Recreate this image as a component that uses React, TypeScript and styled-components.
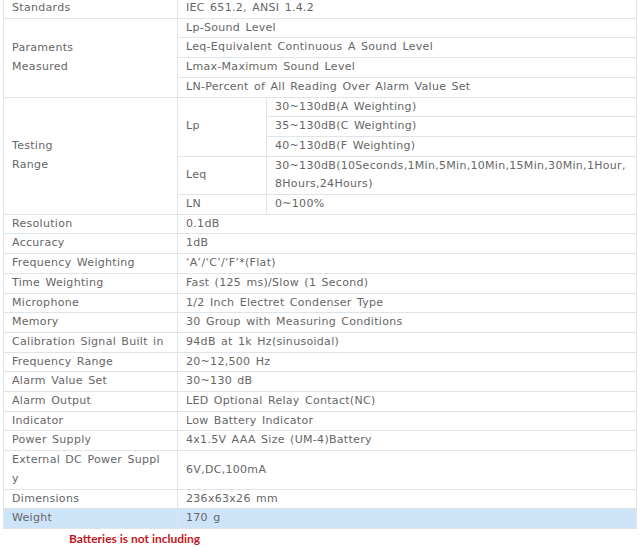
import styled, { createGlobalStyle } from "styled-components"

const GlobalStyle = createGlobalStyle`
  html, body {
    margin: 0;
    padding: 0;
    background: #ffffff;
  }
`

interface Spec {
  label: string
  value: string
}

const simpleRows: Spec[] = [
  { label: "Resolution", value: "0.1dB" },
  { label: "Accuracy", value: "1dB" },
  { label: "Frequency Weighting", value: "‘A’/‘C’/‘F’*(Flat)" },
  { label: "Time Weighting", value: "Fast (125 ms)/Slow (1 Second)" },
  { label: "Microphone", value: "1/2 Inch Electret Condenser Type" },
  { label: "Memory", value: "30 Group with Measuring Conditions" },
  { label: "Calibration Signal Built in", value: "94dB at 1k Hz(sinusoidal)" },
  { label: "Frequency Range", value: "20~12,500 Hz" },
  { label: "Alarm Value Set", value: "30~130 dB" },
  { label: "Alarm Output", value: "LED Optional Relay Contact(NC)" },
  { label: "Indicator", value: "Low Battery Indicator" },
  { label: "Power Supply", value: "4x1.5V AAA Size (UM-4)Battery" },
]

const measured = [
  "Lp-Sound Level",
  "Leq-Equivalent Continuous A Sound Level",
  "Lmax-Maximum Sound Level",
  "LN-Percent of All Reading Over Alarm Value Set",
]

const lpRanges = [
  "30~130dB(A Weighting)",
  "35~130dB(C Weighting)",
  "40~130dB(F Weighting)",
]

const App = () => {
  return (
    <>
      <GlobalStyle />
      <Page>
        <SpecTable>
          <colgroup>
            <col style={{ width: 174 }} />
            <col style={{ width: 89 }} />
            <col />
          </colgroup>
          <tbody>
            <tr>
              <Cell>Standards</Cell>
              <Cell colSpan={2}>IEC 651.2, ANSI 1.4.2</Cell>
            </tr>

            {measured.map((item, i) => (
              <tr key={item}>
                {i === 0 && (
                  <Cell rowSpan={measured.length}>
                    Paraments
                    <br />
                    Measured
                  </Cell>
                )}
                <Cell colSpan={2}>{item}</Cell>
              </tr>
            ))}

            {lpRanges.map((range, i) => (
              <tr key={range}>
                {i === 0 && (
                  <Cell rowSpan={5}>
                    Testing
                    <br />
                    Range
                  </Cell>
                )}
                {i === 0 && <Cell rowSpan={3}>Lp</Cell>}
                <Cell>{range}</Cell>
              </tr>
            ))}
            <tr>
              <Cell>Leq</Cell>
              <Cell>
                30~130dB(10Seconds,1Min,5Min,10Min,15Min,30Min,1Hour,
                <br />
                8Hours,24Hours)
              </Cell>
            </tr>
            <tr>
              <Cell>LN</Cell>
              <Cell>0~100%</Cell>
            </tr>

            {simpleRows.map((row) => (
              <tr key={row.label}>
                <Cell>{row.label}</Cell>
                <Cell colSpan={2}>{row.value}</Cell>
              </tr>
            ))}

            <tr>
              <Cell>
                External DC Power Suppl
                <br />y
              </Cell>
              <Cell colSpan={2}>6V,DC,100mA</Cell>
            </tr>
            <tr>
              <Cell>Dimensions</Cell>
              <Cell colSpan={2}>236x63x26 mm</Cell>
            </tr>
            <tr>
              <Cell $highlight>Weight</Cell>
              <Cell $highlight colSpan={2}>
                170 g
              </Cell>
            </tr>
          </tbody>
        </SpecTable>
        <Note>Batteries is not including</Note>
      </Page>
    </>
  )
}

export default App

const Page = styled.div`
  width: 640px;
  height: 547px;
  overflow: hidden;
  padding-left: 3px;
  box-sizing: border-box;
`

const SpecTable = styled.table`
  width: 634px;
  margin-top: -2px;
  border-collapse: collapse;
  table-layout: fixed;
  font-family: "DejaVu Sans", Verdana, sans-serif;
  font-size: 11px;
  letter-spacing: 0.3px;
  word-spacing: 1.5px;
  color: #666666;
`

const Cell = styled.td<{ $highlight?: boolean }>`
  border: 1px solid #dde4ea;
  padding: 0 0 0 8px;
  line-height: 18.7px;
  vertical-align: middle;
  white-space: nowrap;
  background: ${(p) => (p.$highlight ? "#cde4f8" : "transparent")};
`

const Note = styled.div`
  padding: 2px 0 0 66px;
  font-family: Lato, "Open Sans", sans-serif;
  font-size: 12px;
  font-weight: 700;
  color: #c4161c;
`
